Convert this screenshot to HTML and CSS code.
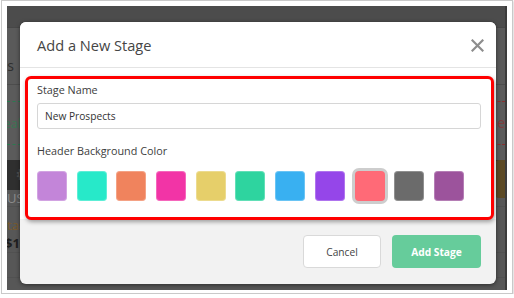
FILE: index.html
```html
<!DOCTYPE html>
<html lang="en">
<head>
    <meta charset="UTF-8">
    <title>Add a New Stage</title>
    <link rel="stylesheet" href="styles.css">
</head>
<body>
    <div class="frame">
        <div class="screen">
            <div class="bg-top"></div>
            <div class="bg-toolbar">
                <span class="cut cut-stages">Stages</span>
            </div>
            <div class="bg-lane">
                <div class="deal deal-won"><span class="cut">Deal</span></div>
                <div class="deal deal-lost"><span>The</span></div>
            </div>
            <div class="bg-band">
                <span class="gear">&#9881;</span>
                <span class="tag"></span>
            </div>
            <div class="bg-row usd"><span class="cut start">USD</span></div>
            <div class="bg-row task"><span class="cut start">task</span></div>
            <div class="bg-row amount"><span class="cut start">$100</span></div>
            <div class="bg-row last"></div>

            <div class="modal">
                <div class="modal-header">
                    <h1>Add a New Stage</h1>
                    <svg class="close" width="13" height="13" viewBox="0 0 13 13">
                        <path d="M1.5 1.5 L11.5 11.5 M11.5 1.5 L1.5 11.5" stroke="#8d8d8d" stroke-width="2.2" stroke-linecap="square"/>
                    </svg>
                </div>
                <div class="modal-body">
                    <div class="highlight">
                        <label for="stage-name">Stage Name</label>
                        <input type="text" id="stage-name" value="New Prospects">

                        <label class="color-label">Header Background Color</label>
                        <div class="swatches">
                            <span class="swatch" style="background:#c385d9"></span>
                            <span class="swatch" style="background:#27e9c9"></span>
                            <span class="swatch" style="background:#f0835d"></span>
                            <span class="swatch" style="background:#f234a6"></span>
                            <span class="swatch" style="background:#e6cf6a"></span>
                            <span class="swatch" style="background:#2ed49f"></span>
                            <span class="swatch" style="background:#39b0f1"></span>
                            <span class="swatch" style="background:#9546e9"></span>
                            <span class="swatch selected" style="background:#ff6a77"></span>
                            <span class="swatch" style="background:#6b6b6b"></span>
                            <span class="swatch" style="background:#9c539c"></span>
                        </div>
                    </div>
                </div>
                <div class="modal-footer">
                    <button class="btn-cancel">Cancel</button>
                    <button class="btn-add">Add Stage</button>
                </div>
            </div>
        </div>
    </div>
</body>
</html>
```
FILE: styles.css
```css
body {
    margin: 0;
    background-color: #fff;
    font-family: "Open Sans", "DejaVu Sans", sans-serif;
}

.frame {
    width: 500px;
    margin-left: 1px;
    padding: 5px 5px 3px 5px;
    border: 1px solid #c9c9c9;
    background-color: #fff;
    box-shadow: 1px 1px 2px rgba(0, 0, 0, 0.15);
}

.screen {
    position: relative;
    width: 500px;
    height: 284px;
    overflow: hidden;
    background-color: #575757;
    border-right: 2px solid #3c3c3c;
    box-sizing: border-box;
}

/* darkened app behind the dialog */
.bg-top {
    height: 21px;
    background-color: #4c4c4c;
    border-bottom: 1px solid #474747;
}

.bg-toolbar {
    height: 57px;
    background-color: #5a5a5a;
    border-bottom: 1px solid #4d4d4d;
    display: flex;
    align-items: flex-end;
    padding-bottom: 9px;
    box-sizing: border-box;
}

.cut {
    display: flex;
    justify-content: flex-end;
    width: 14px;
    overflow: hidden;
    white-space: nowrap;
    font-size: 13px;
}

.cut.start {
    justify-content: flex-start;
}

.cut-stages {
    width: 7px;
    color: #2f2f2f;
    font-size: 14px;
}

.bg-lane {
    height: 75px;
    display: flex;
    justify-content: space-between;
    align-items: center;
    background-color: #5b5b5b;
}

.deal {
    height: 42px;
    display: flex;
    align-items: center;
    font-size: 14px;
}

.deal-won {
    border-top: 1px dashed #2a7a50;
    border-bottom: 1px dashed #2a7a50;
    color: #3b7553;
}

.deal-lost {
    width: 12px;
    overflow: hidden;
    border-top: 1px dashed #8a3030;
    border-bottom: 1px dashed #8a3030;
    color: #7e3d3d;
    white-space: nowrap;
}

.deal-lost span {
    margin-left: -12px;
}

.bg-band {
    height: 30px;
    background-color: #2f2f2f;
    display: flex;
    justify-content: space-between;
    align-items: flex-start;
}

.gear {
    margin: 4px 0 0 8px;
    font-size: 18px;
    line-height: 20px;
    color: #4c4c4c;
}

.tag {
    width: 10px;
    height: 38px;
    background-color: #5c4a25;
    border-radius: 4px 0 0 4px;
}

.bg-row {
    display: flex;
    align-items: center;
}

.usd {
    height: 16px;
    color: #8b8b8b;
    border-bottom: 1px solid #515151;
}

.task {
    height: 18px;
    margin-top: 9px;
    color: #7a5a2c;
}

.amount {
    height: 18px;
    color: #1f1f1f;
    font-weight: bold;
    border-bottom: 1px solid #515151;
}

.amount .cut {
    width: 15px;
    text-indent: -2px;
}

.last {
    height: 24px;
    border-bottom: 1px solid #515151;
}

/* dialog */
.modal {
    position: absolute;
    left: 13px;
    top: 16px;
    width: 476px;
    height: 262px;
    background-color: #f2f2f2;
    border-radius: 6px;
    box-shadow: 0 1px 4px rgba(0, 0, 0, 0.5);
    overflow: hidden;
    display: flex;
    flex-direction: column;
}

.modal-header {
    height: 45px;
    background-color: #fff;
    border-bottom: 1px solid #e4e4e4;
    padding: 0 12px 0 17px;
    display: flex;
    align-items: center;
    justify-content: space-between;
}

h1 {
    margin: 0;
    font-size: 14.6px;
    font-weight: normal;
    color: #454545;
}

.close {
    margin-top: 2px;
}

.modal-body {
    background-color: #fff;
    padding: 8px 2px 0 5px;
}

.highlight {
    border: 3px solid #ff0000;
    border-radius: 6px;
    background-color: #fff;
    padding: 3px 10px 16px 9px;
    box-shadow: 1px 2px 4px rgba(0, 0, 0, 0.35);
    margin-bottom: -1px;
    position: relative;
}

label {
    display: block;
    font-size: 10.8px;
    line-height: 16px;
    color: #3d3d3d;
}

input[type="text"] {
    display: block;
    width: 100%;
    height: 26px;
    margin-top: 5px;
    padding: 0 7px;
    box-sizing: border-box;
    border: 1px solid #d6d6d6;
    border-radius: 3px;
    font-family: "Open Sans", sans-serif;
    font-size: 10.2px;
    color: #333;
}

.color-label {
    margin-top: 14px;
}

.swatches {
    display: flex;
    gap: 9.7px;
    margin-top: 12px;
}

.swatch {
    width: 30px;
    height: 30px;
    border-radius: 4px;
    box-shadow: inset 0 0 0 1px rgba(255, 255, 255, 0.25);
}

.swatch.selected {
    box-shadow: 0 0 0 3px #cdcdcd;
}

.modal-footer {
    flex: 1;
    display: flex;
    justify-content: flex-end;
    align-items: center;
    gap: 11px;
    padding: 0 15px 0 0;
}

button {
    height: 33px;
    border-radius: 4px;
    font-family: "Open Sans", sans-serif;
    font-size: 10.2px;
    cursor: pointer;
}

.btn-cancel {
    width: 78px;
    background-color: #fff;
    border: 1px solid #d9d9d9;
    color: #444;
}

.btn-add {
    width: 89px;
    background-color: #66cc9b;
    border: none;
    color: #fff;
    font-weight: bold;
}
```
